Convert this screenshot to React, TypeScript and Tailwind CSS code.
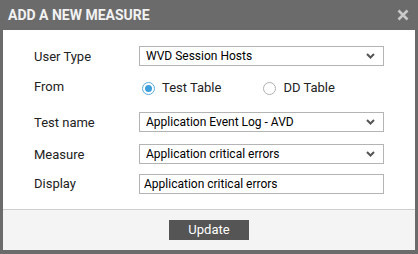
import { useState } from 'react';

const font = { fontFamily: 'Roboto, "Liberation Sans", Arial, sans-serif' };

function Chevron() {
  return (
    <svg width="9" height="6" viewBox="0 0 9 6" className="shrink-0">
      <path d="M1 1 L4.5 4.5 L8 1" fill="none" stroke="#555" strokeWidth="2" />
    </svg>
  );
}

function SelectBox({ value }: { value: string }) {
  return (
    <div className="flex h-[20px] w-[245px] items-center justify-between border border-[#b4b4b4] bg-white pl-[6px] pr-[8px] text-[12px] text-black">
      <span>{value}</span>
      <Chevron />
    </div>
  );
}

function Radio({ checked, label, onClick }: { checked: boolean; label: string; onClick: () => void }) {
  return (
    <button type="button" onClick={onClick} className="flex items-center gap-[7px] text-[13px] text-[#222]">
      <span
        className={
          checked
            ? 'flex h-[13px] w-[13px] items-center justify-center rounded-full border border-[#59acdf] bg-white'
            : 'flex h-[13px] w-[13px] items-center justify-center rounded-full border border-[#b0b0b0] bg-white'
        }
      >
        {checked && <span className="h-[7px] w-[7px] rounded-full bg-[#3d9fdc]" />}
      </span>
      {label}
    </button>
  );
}

export default function App() {
  const [source, setSource] = useState<'test' | 'dd'>('test');

  return (
    <div className="h-[254px] w-[418px] bg-[#6b6b6b] px-[3px] pb-[3px]" style={font}>
      <div className="flex h-[30px] items-center justify-between pl-[5px] pr-[6px]">
        <h1 className="text-[14px] font-bold text-[#f2f2f2]">ADD A NEW MEASURE</h1>
        <svg width="12" height="12" viewBox="0 0 12 12">
          <path d="M1.5 1.5 L10.5 10.5 M10.5 1.5 L1.5 10.5" stroke="#c9c9c9" strokeWidth="2.6" />
        </svg>
      </div>

      <div className="h-[180px] border-b border-[#cfcfcf] bg-white pl-[31px] pr-[30px] pt-[16px]">
        <div className="grid grid-cols-[105px_245px] items-center text-[13px] text-[#222]">
          <div className="translate-y-[1px]">User Type</div>
          <SelectBox value="WVD Session Hosts" />

          <div className="mt-[10px] h-[22px] translate-y-[1px] leading-[20px]">From</div>
          <div className="mt-[12px] flex h-[20px] items-center gap-[42px] pl-[3px]">
            <Radio checked={source === 'test'} label="Test Table" onClick={() => setSource('test')} />
            <Radio checked={source === 'dd'} label="DD Table" onClick={() => setSource('dd')} />
          </div>

          <div className="mt-[14px] translate-y-[1px]">Test name</div>
          <div className="mt-[14px]">
            <SelectBox value="Application Event Log - AVD" />
          </div>

          <div className="mt-[12px] translate-y-[1px]">Measure</div>
          <div className="mt-[12px]">
            <SelectBox value="Application critical errors" />
          </div>

          <div className="mt-[10px]">Display</div>
          <input
            className="mt-[10px] h-[20px] w-[245px] border border-[#b4b4b4] px-[4px] text-[12px] text-black outline-none"
            defaultValue="Application critical errors"
          />
        </div>
      </div>

      <div className="flex h-[40px] items-start justify-center bg-[#f4f4f4] pt-[10px]">
        <button type="button" className="h-[20px] w-[80px] bg-[#555555] text-[13px] text-white">
          Update
        </button>
      </div>
    </div>
  );
}
